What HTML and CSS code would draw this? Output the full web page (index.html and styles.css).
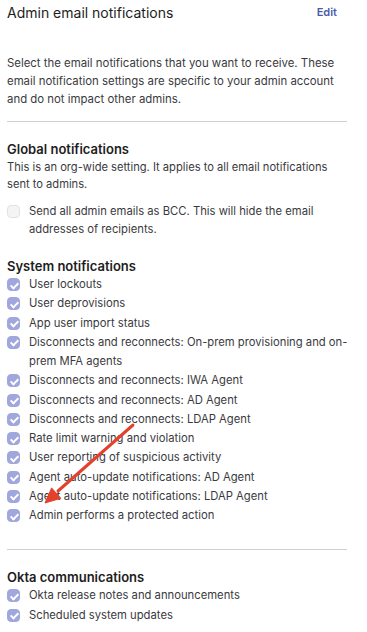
FILE: index.html
```html
<!DOCTYPE html>
<html lang="en">
<head>
<meta charset="utf-8">
<link rel="stylesheet" href="styles.css">
</head>
<body>
<div class="panel">
  <div class="header">
    <h1 class="title">Admin email notifications</h1>
    <a class="edit">Edit</a>
  </div>
  <p class="intro">Select the email notifications that you want to receive. These email notification settings are specific to your admin account and do not impact other admins.</p>
  <hr class="divider">
  <section class="group global">
    <h2 class="group-title">Global notifications</h2>
    <p class="group-desc">This is an org-wide setting. It applies to all email notifications sent to admins.</p>
    <ul class="options">
      <li class="option"><span class="box"></span><span class="label">Send all admin emails as BCC. This will hide the email addresses of recipients.</span></li>
    </ul>
  </section>
  <section class="group system">
    <h2 class="group-title">System notifications</h2>
    <ul class="options checked">
      <li class="option"><span class="box on"></span><span class="label">User lockouts</span></li>
      <li class="option"><span class="box on"></span><span class="label">User deprovisions</span></li>
      <li class="option"><span class="box on"></span><span class="label">App user import status</span></li>
      <li class="option"><span class="box on"></span><span class="label">Disconnects and reconnects: On-prem provisioning and on-prem MFA agents</span></li>
      <li class="option"><span class="box on"></span><span class="label">Disconnects and reconnects: IWA Agent</span></li>
      <li class="option"><span class="box on"></span><span class="label">Disconnects and reconnects: AD Agent</span></li>
      <li class="option"><span class="box on"></span><span class="label">Disconnects and reconnects: LDAP Agent</span></li>
      <li class="option"><span class="box on"></span><span class="label">Rate limit warning and violation</span></li>
      <li class="option"><span class="box on"></span><span class="label">User reporting of suspicious activity</span></li>
      <li class="option"><span class="box on"></span><span class="label">Agent auto-update notifications: AD Agent</span></li>
      <li class="option"><span class="box on"></span><span class="label">Agent auto-update notifications: LDAP Agent</span></li>
      <li class="option"><span class="box on"></span><span class="label">Admin performs a protected action</span></li>
    </ul>
  </section>
  <hr class="divider second">
  <section class="group okta">
    <h2 class="group-title">Okta communications</h2>
    <ul class="options checked">
      <li class="option"><span class="box on"></span><span class="label">Okta release notes and announcements</span></li>
      <li class="option"><span class="box on"></span><span class="label">Scheduled system updates</span></li>
    </ul>
  </section>
  <svg class="arrow" width="120" height="100" viewBox="0 0 120 100">
    <line x1="106" y1="7" x2="31" y2="73" stroke="#e4412c" stroke-width="3" stroke-linecap="round"/>
    <polygon points="18,85 33.8,80.3 24.6,69.9" fill="#e4412c" stroke="#e4412c" stroke-width="1" stroke-linejoin="round"/>
  </svg>
</div>
</body>
</html>
```
FILE: styles.css
```css
* { box-sizing: border-box; }
html, body { margin: 0; padding: 0; background: #fff; }
body {
  font-family: Inter, "Noto Sans", sans-serif;
  color: #2c2c30;
  width: 367px;
  height: 632px;
  overflow: hidden;
}
.panel {
  position: relative;
  padding: 2px 20px 0 7px;
}
.header {
  display: flex;
  justify-content: space-between;
  align-items: center;
  height: 20px;
}
.title {
  margin: 0;
  font-size: 14px;
  font-weight: 400;
  color: #1d1d21;
}
.edit {
  font-size: 11px;
  font-weight: 600;
  color: #4b5bab;
  margin-right: 10px;
}
.intro {
  margin: 32px 0 0;
  padding-right: 2px;
  font-size: 11.4px;
  line-height: 18px;
  color: #3a3a3e;
}
.divider {
  border: 0;
  border-top: 1px solid #cfcfd2;
  margin: 13px 0 0;
}
.divider.second { margin-top: 24px; }
.group { margin-top: 19px; }
.system { margin-top: 20px; }
.okta { margin-top: 19px; }
.group-title {
  margin: 0;
  font-size: 13px;
  font-weight: 600;
  line-height: 17px;
  color: #1d1d21;
}
.group-desc {
  margin: 1px 0 0;
  font-size: 11.15px;
  line-height: 17px;
  color: #3a3a3e;
}
.options {
  list-style: none;
  margin: 0 -8px 0 0;
  padding: 0;
}
.global .options { margin-top: 9px; }
.option {
  display: flex;
  align-items: flex-start;
  gap: 9px;
  font-size: 11.25px;
  line-height: 19.25px;
  color: #3a3a3e;
}
.global .option { line-height: 18px; }
.box {
  flex: none;
  width: 13px;
  height: 13px;
  border-radius: 4px;
  margin-top: 3px;
  border: 1px solid #e2e2e4;
  background: #f4f4f5;
  position: relative;
}
.box.on {
  background: #a0a7dc;
  border-color: #a0a7dc;
}
.box.on::after {
  content: "";
  position: absolute;
  left: 3.5px;
  top: 1.5px;
  width: 3px;
  height: 6px;
  border: solid #fff;
  border-width: 0 2px 2px 0;
  transform: rotate(45deg);
}
.label { flex: 1; }
.arrow {
  position: absolute;
  left: 27px;
  top: 418px;
}
```
